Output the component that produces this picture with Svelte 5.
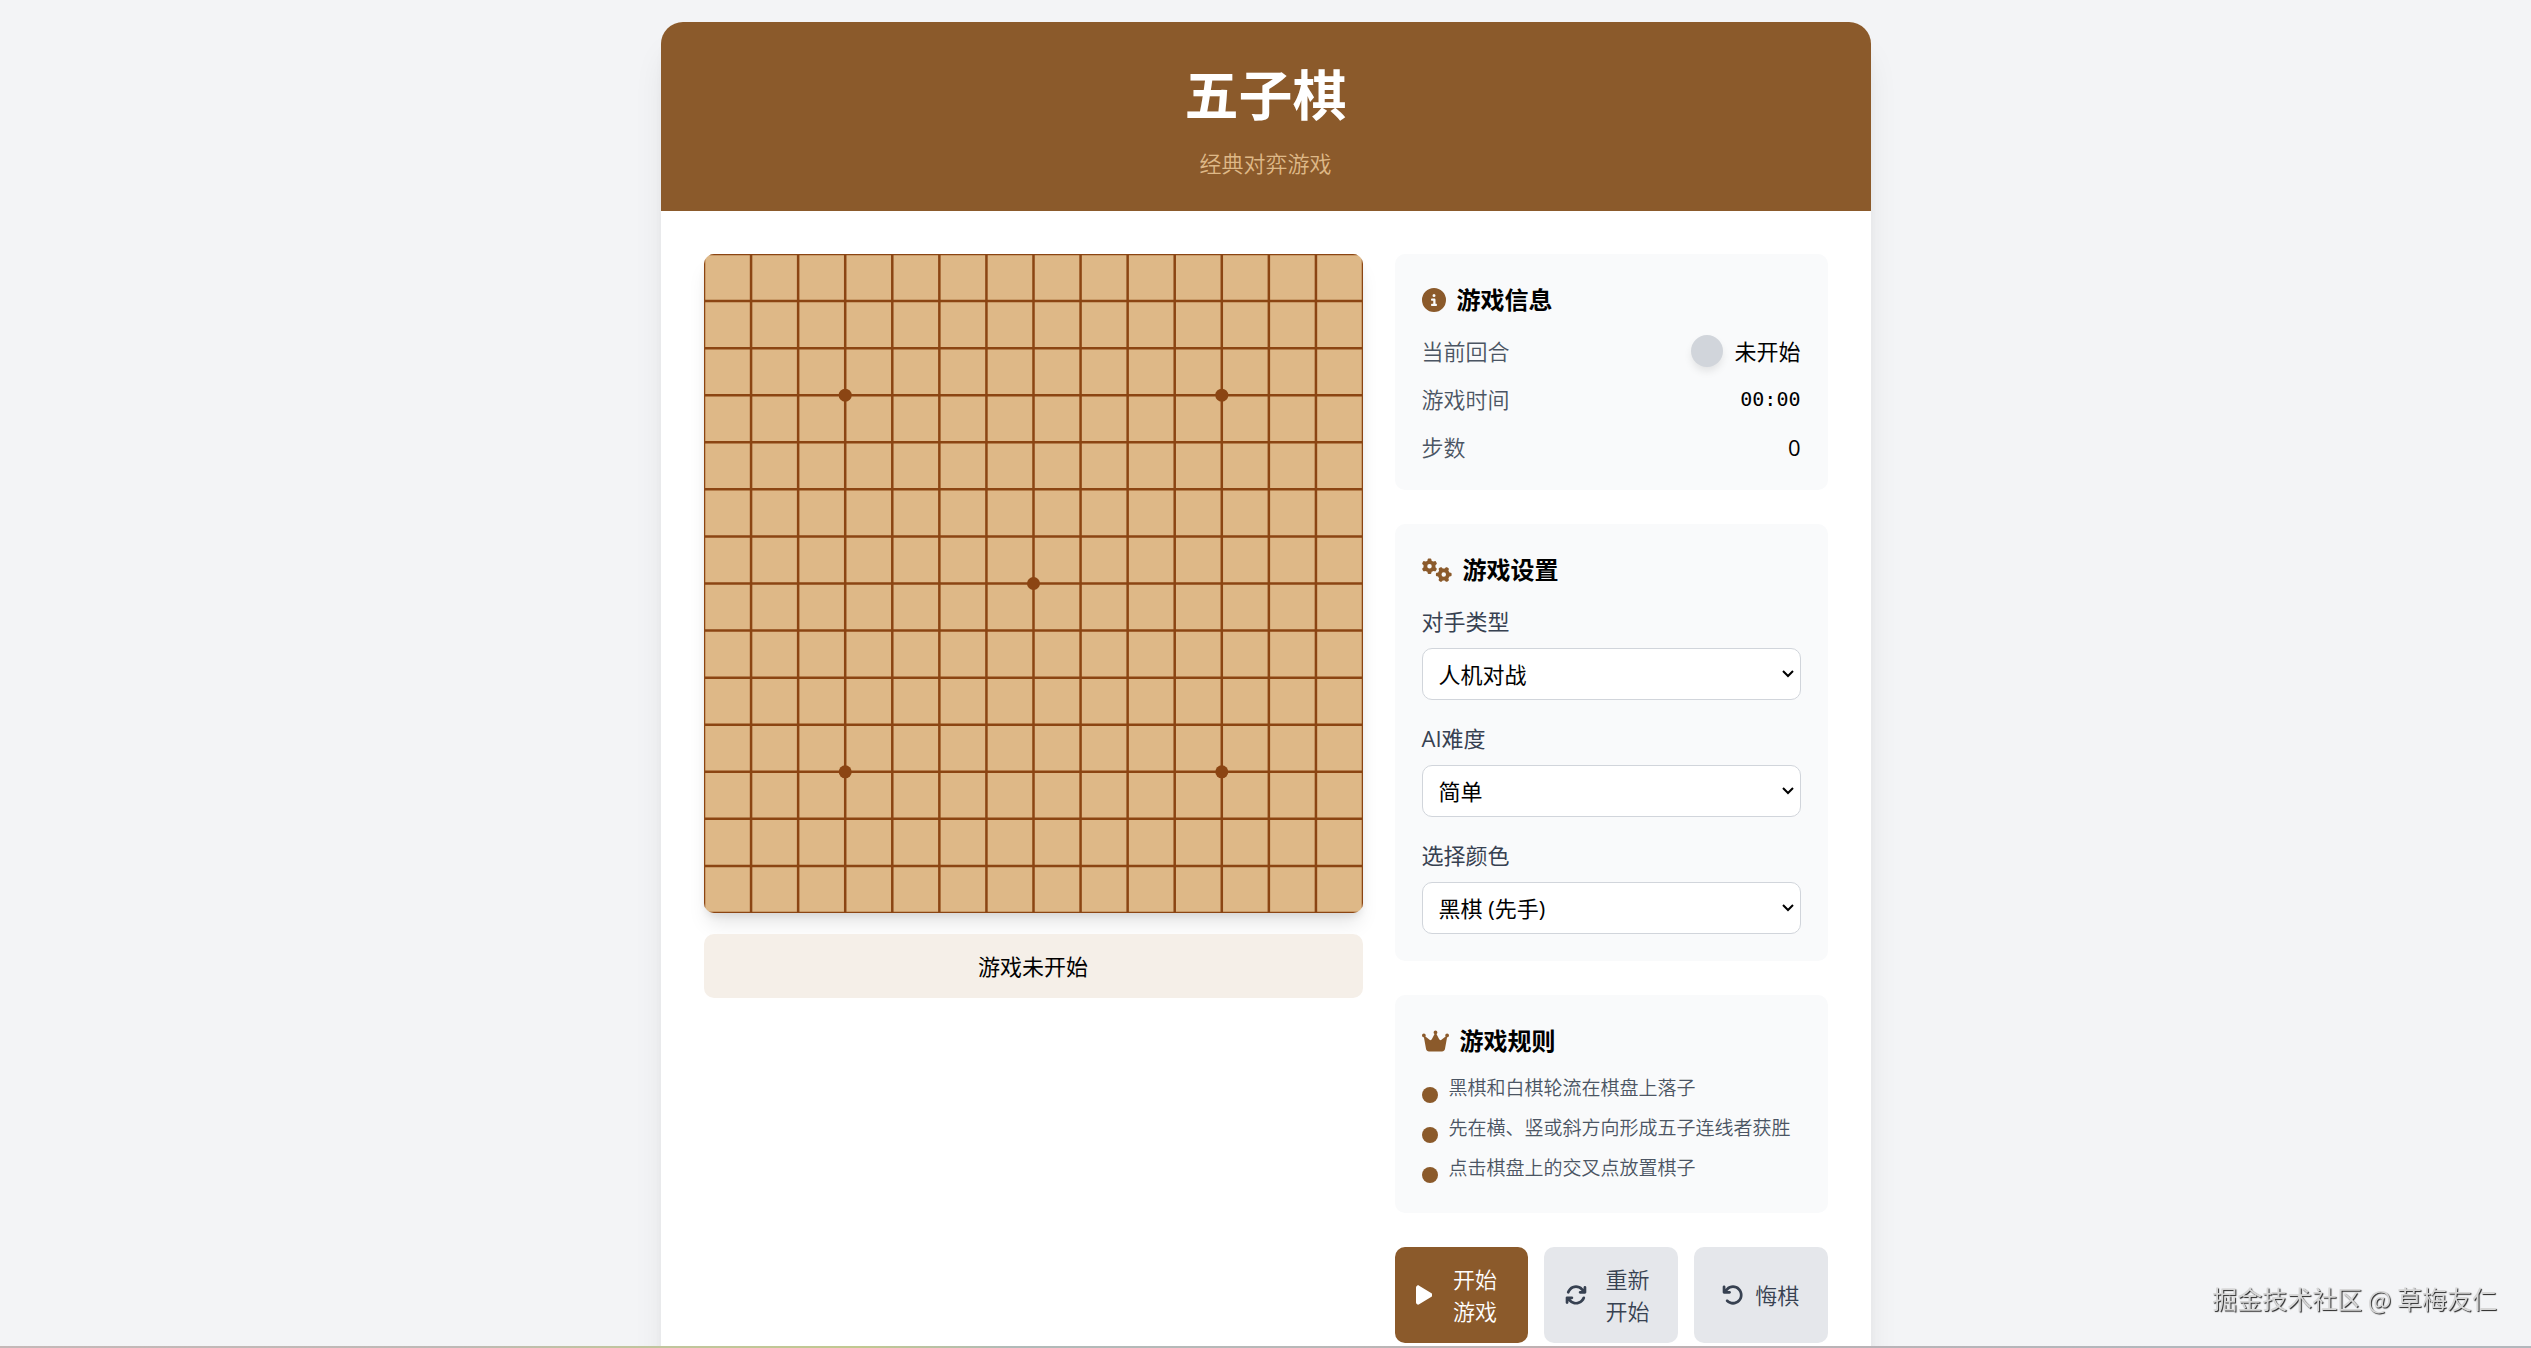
<script lang="ts">
  const cell = 47;
  const lines = Array.from({ length: 15 }, (_, i) => i * cell);
  const size = cell * 14;
  const stars = [[3, 3], [11, 3], [7, 7], [3, 11], [11, 11]];

  const settings = [
    { id: 'opponent', label: '对手类型', options: ['人机对战', '双人对战'] },
    { id: 'level', label: 'AI难度', options: ['简单', '中等', '困难'] },
    { id: 'color', label: '选择颜色', options: ['黑棋 (先手)', '白棋 (后手)'] },
  ];

  const rules = [
    '黑棋和白棋轮流在棋盘上落子',
    '先在横、竖或斜方向形成五子连线者获胜',
    '点击棋盘上的交叉点放置棋子',
  ];

  let status = $state('未开始');
  let moves = $state(0);
  let time = $state('00:00');
</script>

<div class="page">
  <main class="game">
    <header class="header">
      <h1>五子棋</h1>
      <p>经典对弈游戏</p>
    </header>

    <div class="content">
      <section class="board-area">
        <svg class="board" viewBox="0 0 {size} {size}" role="img" aria-label="棋盘">
          <g stroke="#8b4513" stroke-width="2.5">
            {#each lines as p}
              <line x1="0" y1={p} x2={size} y2={p} />
              <line x1={p} y1="0" x2={p} y2={size} />
            {/each}
          </g>
          {#each stars as [x, y]}
            <circle cx={x * cell} cy={y * cell} r="6.5" fill="#8b4513" />
          {/each}
        </svg>
        <div class="status">游戏{status}</div>
      </section>

      <aside class="sidebar">
        <section class="panel">
          <h2>
            <svg viewBox="0 0 512 512"><path d="M256 512A256 256 0 1 0 256 0a256 256 0 1 0 0 512zM216 336h24V272H216c-13.3 0-24-10.7-24-24s10.7-24 24-24h48c13.3 0 24 10.7 24 24v88h8c13.3 0 24 10.7 24 24s-10.7 24-24 24H216c-13.3 0-24-10.7-24-24s10.7-24 24-24zm40-208a32 32 0 1 1 0 64 32 32 0 1 1 0-64z"/></svg>
            游戏信息
          </h2>
          <div class="info">
            <div class="row">
              <span class="name">当前回合</span>
              <span class="turn"><i class="stone"></i>{status}</span>
            </div>
            <div class="row">
              <span class="name">游戏时间</span>
              <span class="time">{time}</span>
            </div>
            <div class="row">
              <span class="name">步数</span>
              <span>{moves}</span>
            </div>
          </div>
        </section>

        <section class="panel">
          <h2>
            <svg viewBox="0 0 640 512"><path d="M308.500 135.300c7.100-6.300 9.900-16.200 6.200-25c-2.300-5.300-4.800-10.500-7.600-15.500L304 89.400c-3-5-6.300-9.900-9.800-14.600c-5.700-7.600-15.700-10.100-24.700-7.100l-28.200 9.300c-10.700-8.800-23-16-36.200-20.900L199 27.100c-1.900-9.300-9.100-16.700-18.500-17.800C173.900 8.400 167.200 8 160.400 8h-.7c-6.800 0-13.500 .4-20.100 1.200c-9.400 1.100-16.600 8.600-18.500 17.800L115 56.100c-13.300 5-25.500 12.100-36.200 20.900L50.500 67.800c-9-3-19-.5-24.700 7.100c-3.500 4.700-6.800 9.600-9.900 14.600l-3 5.300c-2.800 5-5.300 10.200-7.600 15.600c-3.700 8.700-.9 18.600 6.200 25l22.200 19.800C32.600 161.900 32 168.900 32 176s.6 14.100 1.700 20.900L11.500 216.700c-7.100 6.300-9.900 16.200-6.200 25c2.300 5.300 4.800 10.500 7.600 15.600l3 5.200c3 5.100 6.300 9.900 9.900 14.600c5.700 7.600 15.700 10.100 24.700 7.100l28.200-9.300c10.700 8.800 23 16 36.200 20.900l6.100 29.100c1.900 9.300 9.100 16.700 18.500 17.800c6.700 .8 13.500 1.200 20.400 1.200s13.700-.4 20.400-1.200c9.400-1.100 16.600-8.600 18.500-17.800l6.100-29.100c13.300-5 25.500-12.100 36.200-20.900l28.200 9.300c9 3 19 .5 24.700-7.100c3.500-4.700 6.800-9.500 9.800-14.600l3.100-5.400c2.800-5 5.300-10.200 7.600-15.500c3.700-8.700 .9-18.600-6.200-25l-22.200-19.800c1.100-6.800 1.700-13.800 1.700-20.900s-.6-14.100-1.700-20.900l22.200-19.800zM112 176a48 48 0 1 1 96 0 48 48 0 1 1 -96 0zM504.700 500.500c6.300 7.100 16.200 9.900 25 6.200c5.300-2.300 10.500-4.800 15.500-7.600l5.400-3.100c5-3 9.900-6.300 14.600-9.800c7.600-5.700 10.100-15.700 7.100-24.700l-9.300-28.200c8.800-10.700 16-23 20.900-36.200l29.100-6.100c9.300-1.900 16.700-9.100 17.800-18.500c.8-6.700 1.200-13.500 1.200-20.400s-.4-13.700-1.200-20.400c-1.100-9.400-8.600-16.600-17.800-18.500L583.900 307c-5-13.300-12.100-25.500-20.900-36.200l9.300-28.200c3-9 .5-19-7.100-24.700c-4.700-3.500-9.600-6.800-14.600-9.900l-5.300-3c-5-2.800-10.200-5.300-15.600-7.600c-8.700-3.700-18.600-.9-25 6.200l-19.800 22.200c-6.800-1.100-13.800-1.700-20.900-1.700s-14.100 .6-20.900 1.700l-19.800-22.200c-6.300-7.100-16.200-9.900-25-6.200c-5.300 2.300-10.500 4.800-15.600 7.600l-5.200 3c-5.100 3-9.900 6.300-14.600 9.900c-7.600 5.700-10.100 15.700-7.100 24.700l9.300 28.200c-8.800 10.700-16 23-20.900 36.200L315.100 313c-9.300 1.900-16.700 9.100-17.800 18.500c-.8 6.700-1.200 13.500-1.200 20.400s.4 13.700 1.200 20.400c1.100 9.400 8.600 16.600 17.800 18.500l29.100 6.100c5 13.300 12.100 25.500 20.900 36.200l-9.300 28.200c-3 9-.5 19 7.100 24.700c4.700 3.500 9.500 6.800 14.600 9.800l5.400 3.100c5 2.800 10.200 5.300 15.500 7.600c8.700 3.700 18.600 .9 25-6.200l19.800-22.200c6.800 1.100 13.800 1.700 20.900 1.700s14.100-.6 20.900-1.700l19.800 22.200zM464 304a48 48 0 1 1 0 96 48 48 0 1 1 0-96z"/></svg>
            游戏设置
          </h2>
          <div class="fields">
            {#each settings as field}
              <div class="field">
                <label for={field.id}>{field.label}</label>
                <div class="select">
                  <select id={field.id}>
                    {#each field.options as option}
                      <option>{option}</option>
                    {/each}
                  </select>
                  <svg viewBox="0 0 12 8" fill="none" stroke="#000" stroke-width="2"><path d="M1 1l5 5 5-5"/></svg>
                </div>
              </div>
            {/each}
          </div>
        </section>

        <section class="panel">
          <h2>
            <svg viewBox="0 0 576 512"><path d="M309 106c11.400-7 19-19.700 19-34c0-22.100-17.900-40-40-40s-40 17.900-40 40c0 14.400 7.600 27 19 34L209.700 220.600c-9.100 18.200-32.700 23.400-48.600 10.700L72 160c5-6.700 8-15 8-24c0-22.100-17.900-40-40-40S0 113.900 0 136s17.900 40 40 40c.2 0 .5 0 .7 0L86.400 427.400c5.500 30.400 32 52.600 63 52.600H426.600c30.900 0 57.400-22.100 63-52.600L535.300 176c.2 0 .5 0 .7 0c22.100 0 40-17.900 40-40s-17.900-40-40-40s-40 17.900-40 40c0 9 3 17.300 8 24l-89.100 71.300c-15.900 12.700-39.500 7.500-48.600-10.700L309 106z"/></svg>
            游戏规则
          </h2>
          <ul class="rules">
            {#each rules as rule}
              <li>{rule}</li>
            {/each}
          </ul>
        </section>

        <div class="actions">
          <button class="primary">
            <svg viewBox="0 0 384 512"><path d="M73 39c-14.800-9.100-33.400-9.400-48.500-.9S0 62.600 0 80V432c0 17.400 9.400 33.400 24.500 41.900s33.700 8.100 48.500-.9L361 297c14.300-8.700 23-24.200 23-41s-8.700-32.200-23-41L73 39z"/></svg>
            <span>开始游戏</span>
          </button>
          <button>
            <svg viewBox="0 0 512 512"><path d="M105.100 202.600c7.700-21.800 20.200-42.300 37.800-59.800c62.500-62.500 163.800-62.500 226.300 0L386.300 160H352c-17.700 0-32 14.300-32 32s14.300 32 32 32H463.500h.4c17.700 0 32-14.300 32-32V80c0-17.700-14.300-32-32-32s-32 14.300-32 32v35.200L414.400 97.600c-87.500-87.500-229.300-87.500-316.800 0C73.200 122 55.600 150.700 44.800 181.400c-5.900 16.700 2.900 34.900 19.500 40.800s34.900-2.900 40.800-19.500zM39 289.300c-5 1.500-9.800 4.200-13.700 8.200c-4 4-6.700 8.800-8.100 14c-.3 1.200-.6 2.500-.8 3.800c-.3 1.700-.4 3.400-.4 5.100V432c0 17.700 14.300 32 32 32s32-14.300 32-32V396.900l17.600 17.500c87.500 87.400 229.300 87.400 316.700 0c24.400-24.400 42.100-53.100 52.900-83.700c5.900-16.700-2.900-34.900-19.500-40.800s-34.900 2.900-40.800 19.500c-7.700 21.800-20.200 42.300-37.800 59.800c-62.500 62.500-163.800 62.500-226.300 0l-.1-.1L125.600 352H160c17.700 0 32-14.300 32-32s-14.300-32-32-32H48.400c-1.600 0-3.200 .1-4.800 .3s-3.100 .5-4.600 1z"/></svg>
            <span>重新开始</span>
          </button>
          <button>
            <svg viewBox="0 0 512 512"><path d="M125.700 160H176c17.700 0 32 14.300 32 32s-14.300 32-32 32H48c-17.700 0-32-14.300-32-32V64c0-17.700 14.300-32 32-32s32 14.300 32 32v51.200L97.600 97.600c87.500-87.500 229.300-87.500 316.800 0s87.500 229.300 0 316.800s-229.300 87.500-316.800 0c-12.500-12.500-12.500-32.800 0-45.300s32.800-12.500 45.300 0c62.500 62.500 163.800 62.500 226.300 0s62.500-163.800 0-226.300s-163.800-62.500-226.300 0L125.700 160z"/></svg>
            <span>悔棋</span>
          </button>
        </div>
      </aside>
    </div>
  </main>

  <div class="watermark">掘金技术社区 @ 草梅友仁</div>
  <div class="edge"></div>
</div>

<style>
  :global(body) {
    background: #f3f4f6;
  }

  .page {
    box-sizing: border-box;
    height: 100vh;
    overflow: hidden;
    padding: 22px;
    background: #f3f4f6;
    color: #000;
    font-family: "Open Sans", "Noto Sans CJK SC", sans-serif;
    font-size: 22px;
    line-height: 32px;
  }

  .game {
    max-width: 1210px;
    margin: 0 auto;
    background: #fff;
    border-radius: 22px;
    overflow: hidden;
    box-shadow: 0 27px 34px -7px rgba(0, 0, 0, 0.1), 0 11px 14px -8px rgba(0, 0, 0, 0.1);
  }

  .header {
    padding: 32px;
    background: #8b5a2b;
    text-align: center;
  }

  h1 {
    margin: 0 0 10px;
    font-size: 54px;
    line-height: 83px;
    font-weight: 700;
    color: #fff;
  }

  .header p {
    margin: 0;
    color: #deb887;
    font-weight: 350;
  }

  .content {
    display: flex;
    align-items: flex-start;
    gap: 32px;
    padding: 43px;
  }

  .board-area {
    flex: 1;
    min-width: 0;
  }

  .board {
    display: block;
    width: 100%;
    background: #deb887;
    border-radius: 10px;
    box-shadow: 0 14px 20px -4px rgba(0, 0, 0, 0.1), 0 5px 8px -3px rgba(0, 0, 0, 0.1);
  }

  .status {
    margin-top: 21px;
    padding: 16px;
    border-radius: 10px;
    background: #f5efe8;
    text-align: center;
  }

  .sidebar {
    display: flex;
    flex-direction: column;
    gap: 34px;
    width: 433px;
  }

  .panel {
    padding: 27px;
    border-radius: 10px;
    background: #f9fafb;
  }

  h2 {
    display: flex;
    align-items: center;
    gap: 11px;
    margin: 0 0 16px;
    font-size: 24px;
    line-height: 38px;
    font-weight: 700;
  }

  h2 svg {
    height: 24px;
    fill: #8b5a2b;
  }

  .info {
    display: flex;
    flex-direction: column;
    gap: 16px;
  }

  .row {
    display: flex;
    justify-content: space-between;
  }

  .name {
    color: #4b5563;
    font-weight: 350;
  }

  .turn {
    display: flex;
    align-items: center;
    gap: 11px;
  }

  .stone {
    width: 32px;
    height: 32px;
    border-radius: 50%;
    background: #d1d5db;
    box-shadow: 0 5px 8px -1px rgba(0, 0, 0, 0.1);
  }

  .time {
    font-family: "DejaVu Sans Mono", monospace;
    font-size: 20px;
  }

  .fields {
    display: flex;
    flex-direction: column;
    gap: 22px;
  }

  .field {
    display: flex;
    flex-direction: column;
    gap: 11px;
  }

  label {
    color: #374151;
  }

  .select {
    display: grid;
    align-items: center;
  }

  select {
    grid-area: 1 / 1;
    height: 52px;
    padding: 0 16px;
    border: 1px solid #d1d5db;
    border-radius: 10px;
    appearance: none;
    background: #fff;
    color: #000;
    font: inherit;
  }

  .select svg {
    grid-area: 1 / 1;
    justify-self: end;
    width: 12px;
    margin-right: 7px;
    pointer-events: none;
  }

  .rules {
    display: flex;
    flex-direction: column;
    gap: 10px;
    margin: 0;
    padding: 0;
    list-style: none;
    color: #4b5563;
    font-size: 19px;
    font-weight: 350;
    line-height: 24px;
  }

  .rules li {
    display: flex;
    align-items: flex-start;
    gap: 11px;
    min-height: 30px;
  }

  .rules li::before {
    content: "";
    width: 16px;
    height: 16px;
    margin-top: 11px;
    border-radius: 50%;
    background: #8b5a2b;
  }

  .actions {
    display: grid;
    grid-template-columns: repeat(3, 1fr);
    gap: 16px;
  }

  button {
    display: flex;
    align-items: center;
    justify-content: center;
    gap: 11px;
    min-width: 0;
    padding: 16px 21px;
    border: none;
    border-radius: 10px;
    background: #e5e7eb;
    color: #374151;
    font: inherit;
    font-weight: 350;
    cursor: pointer;
  }

  button svg {
    flex-shrink: 0;
    height: 22px;
    fill: currentColor;
  }

  .primary {
    background: #8b5a2b;
    color: #fff;
  }

  .watermark {
    position: fixed;
    right: 34px;
    bottom: 34px;
    color: #d6d6d6;
    font-family: "Noto Sans CJK SC", sans-serif;
    font-size: 25px;
    text-shadow: 1px 1px 1px #222;
  }

  .edge {
    position: fixed;
    right: 0;
    bottom: 0;
    left: 0;
    height: 2px;
    background: linear-gradient(to right, #c4b8b8, #bdb9b6 18%, #c0c4a0 24%, #c0c890 34%, #b0bab8 40%, #b8b8b8 52%, #bfb0b2 62%, #b2b7bc 85%);
  }
</style>
